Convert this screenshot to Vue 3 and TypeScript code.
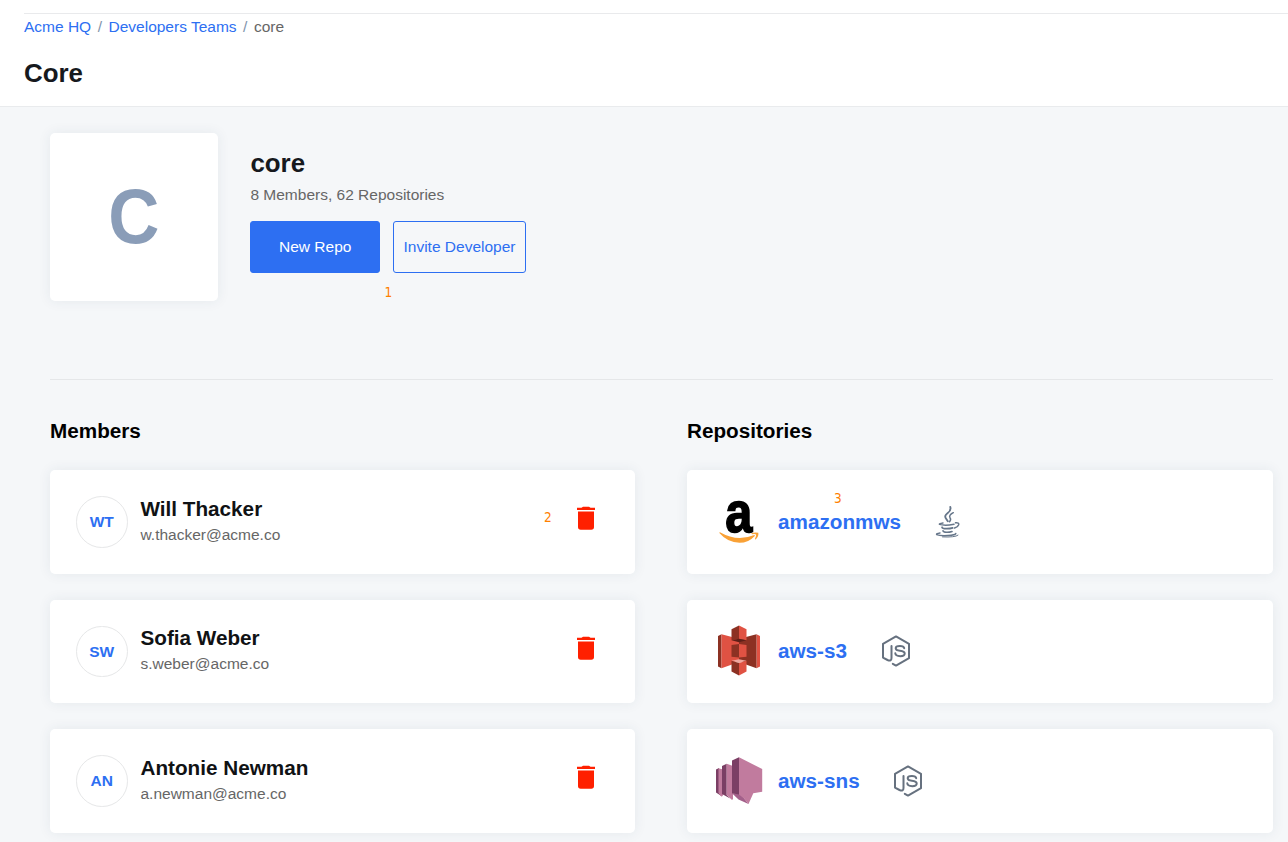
<script setup lang="ts">
interface Member {
  name: string
  email: string
  initials: string
  marker?: string
}

interface Repo {
  name: string
  logo: 'amazon' | 's3' | 'sns'
  lang: 'java' | 'node'
  marker?: string
}

const members: Member[] = [
  { name: 'Will Thacker', email: 'w.thacker@acme.co', initials: 'WT', marker: '2' },
  { name: 'Sofia Weber', email: 's.weber@acme.co', initials: 'SW' },
  { name: 'Antonie Newman', email: 'a.newman@acme.co', initials: 'AN' },
]

const repos: Repo[] = [
  { name: 'amazonmws', logo: 'amazon', lang: 'java', marker: '3' },
  { name: 'aws-s3', logo: 's3', lang: 'node' },
  { name: 'aws-sns', logo: 'sns', lang: 'node' },
]
</script>

<template>
  <div class="page">
    <header class="header">
      <nav class="crumbs">
        <a>Acme HQ</a><span class="slash">/</span><a>Developers Teams</a><span class="slash">/</span><span>core</span>
      </nav>
      <h1 class="title">Core</h1>
    </header>
    <main class="main">
      <section class="team">
        <div class="tile"><span class="letter">C</span></div>
        <div class="info">
          <h2 class="team-name">core</h2>
          <p class="stats">8 Members, 62 Repositories</p>
          <div class="actions">
            <button class="btn primary">New Repo</button>
            <button class="btn outline">Invite Developer</button>
            <span class="marker marker-actions">1</span>
          </div>
        </div>
      </section>
      <div class="columns">
        <section class="column">
          <h3 class="heading">Members</h3>
          <article v-for="m in members" :key="m.email" class="card member">
            <div class="avatar">{{ m.initials }}</div>
            <div class="person">
              <div class="name">{{ m.name }}</div>
              <div class="email">{{ m.email }}</div>
            </div>
            <span v-if="m.marker" class="marker marker-member">{{ m.marker }}</span>
            <svg class="trash" width="20" height="26" viewBox="0 0 20 26">
              <path d="M5.500 1.700L7 .8h6l1.500 .9H19v2.400H1V1.700z" />
              <path d="M2 5.500h16v15.600q0 2.700-2.700 2.700H4.700Q2 23.800 2 21.100z" />
            </svg>
          </article>
        </section>
        <section class="column">
          <h3 class="heading">Repositories</h3>
          <article v-for="r in repos" :key="r.name" class="card repo">
            <svg v-if="r.logo === 'amazon'" class="logo" width="52" height="52" viewBox="0 0 52 52">
              <text class="amazon-a" transform="translate(12.200 35.500) scale(.84 1)">a</text>
              <path d="M7 36.200Q24 46 40.500 39.200Q42.600 38.600 41.500 40.200Q35.500 46.800 26.500 46.800Q14.500 46.500 6.600 37.300Q6 36 7 36.200z" fill="#f9a136" />
              <path d="M38.700 37.300Q41.700 35.800 45.300 36.800Q46 40.500 42.700 43.400Q41.700 43.600 42.100 42.600Q43.500 39.600 43.100 38.500Q42.300 37.700 38.900 38.300Q38 38 38.700 37.300z" fill="#f9a136" />
            </svg>
            <svg v-else-if="r.logo === 's3'" class="logo" width="52" height="52" viewBox="0 0 52 52">
              <path d="M18 12h8v25h-8z" fill="#e05243" />
              <path d="M26 12h8v25h-8z" fill="#8c3123" />
              <path d="M5 11L8.500 9.200v34L5 41.500z" fill="#8c3123" />
              <path d="M8.500 9.200L19 12v27.500L8.500 43.200z" fill="#e05243" />
              <path d="M47 11l-3.500-1.800v34l3.500-1.700z" fill="#e05243" />
              <path d="M43.500 9.200L33 12v27.500l10.500 3.700z" fill="#8c3123" />
              <path d="M18.500 20L26 19v13.500l-7.500-.8z" fill="#8c3123" />
              <path d="M26 19l7.500 1v11.700L26 32.500z" fill="#e05243" />
              <path d="M26 .5l-7.500 3.800v11L26 14z" fill="#8c3123" />
              <path d="M26 .5l7.500 3.800v11L26 14z" fill="#e05243" />
              <path d="M18.500 15.300L26 13.800l7.500 1.500L26 17.300z" fill="#5e1f18" />
              <path d="M18.500 35.800L26 34.300l7.500 1.500L26 38z" fill="#f0a8a0" />
              <path d="M18.500 35.800L26 38v12.500l-7.500-4z" fill="#8c3123" />
              <path d="M33.500 35.800L26 38v12.500l7.500-4z" fill="#e05243" />
            </svg>
            <svg v-else class="logo" width="52" height="52" viewBox="0 0 52 52">
              <path d="M3 14.500L6 13v25l3.500 3.700L3 37.500z" fill="#7b3f65" />
              <path d="M5.500 13.200L10 14.500v26L8.200 41.500 5.500 38z" fill="#c17b9e" />
              <path d="M9 11l4.700-2.300V40l3.500 3.500L9 39z" fill="#7b3f65" />
              <path d="M13.700 8.700L20 11v33l-1 1L13.700 40z" fill="#c17b9e" />
              <path d="M19 38.200L27 38l8.500 11L25.500 44.500z" fill="#a3608a" />
              <path d="M19 5.500L26 2.300v37.200l-7-1.200z" fill="#7b3f65" />
              <path d="M26 2.300l23.200 11.700v22.700L40.300 38.300l-4.800 10.700L31 43.500L26 39.500z" fill="#c17b9e" />
            </svg>
            <a class="repo-name">{{ r.name }}</a>
            <svg v-if="r.lang === 'java'" class="java" width="26" height="32" viewBox="0 0 26 32">
              <g fill="none" stroke="#66768a" stroke-linecap="round">
                <path d="M15.300 1Q16.300 4.500 12.500 7.200T11.300 13L12.800 15.200" stroke-width="1.900" />
                <path d="M18.300 6.700Q13.500 9.200 15 11.700Q16.400 13.500 14.500 15.700" stroke-width="1.500" />
                <path d="M8 17Q3.800 17.800 4.500 18.400Q10 20 19 18.300" stroke-width="1.500" />
                <path d="M20.500 16.800Q24.300 16.400 23.700 18.800Q22.800 21.200 19.600 22" stroke-width="1.500" />
                <path d="M7 21.200Q7.500 22.700 11 22.700Q15 22.800 17.700 21.900" stroke-width="1.700" />
                <path d="M8 24.800Q8.500 26.300 11.500 26.300Q14.500 26.400 17 25.500" stroke-width="1.600" />
                <path d="M5 27Q1 27.700 1.700 28.600Q5 30 13 29.500Q20.500 29.100 20.800 27.500" stroke-width="1.500" />
                <path d="M7.500 30.900Q20 31.500 23 29.200" stroke-width="1" />
              </g>
            </svg>
            <svg v-else class="node" width="30" height="32" viewBox="0 0 30 32">
              <g fill="none" stroke="#66717f" stroke-width="2" stroke-linejoin="round" stroke-linecap="round">
                <path d="M10.500 11V23Q10.500 26.800 6.500 25L2 22.600V8.800L15 1.400L28 8.800V23.200L15 30.600L11.800 28.800" />
                <path d="M23.200 13.200Q22.800 10.900 18.900 10.900Q14.700 10.900 14.700 13.200Q14.700 15.300 18.900 15.700Q23.700 16.200 23.700 18.500Q23.700 21.200 19.300 21.200Q14.500 21.200 14.300 18.300" />
              </g>
            </svg>
            <span v-if="r.marker" class="marker marker-repo">{{ r.marker }}</span>
          </article>
        </section>
      </div>
    </main>
  </div>
</template>

<style>
body {
  margin: 0;
  background: #f5f7f9;
}
</style>

<style scoped>
.page {
  box-sizing: border-box;
  width: 1288px;
  height: 842px;
  overflow: hidden;
  background: #f5f7f9;
  color: #16191d;
  font-family: "Liberation Sans", Arial, sans-serif;
  font-size: 15.5px;
}
.header {
  box-sizing: border-box;
  height: 107px;
  padding: 13px 0 0 24px;
  border-bottom: 1px solid #e9ebed;
  background: #fff;
}
.crumbs {
  border-top: 1px solid #e9eaec;
  padding-top: 4px;
  line-height: 18px;
  color: #666;
}
.crumbs a {
  color: #2d6ff2;
}
.slash {
  margin: 0 6.500px;
  color: #8294ac;
}
.title,
.team-name {
  margin: 0;
  font-size: 25.900px;
  line-height: 30px;
}
.title {
  margin-top: 22px;
}
.main {
  padding: 26px 15px 0 50px;
}
.team {
  display: flex;
  box-sizing: border-box;
  height: 247px;
  border-bottom: 1px solid #e5e7e9;
}
.tile,
.card {
  border-radius: 5px;
  background: #fff;
  box-shadow: 0 0 13px rgba(40, 70, 90, 0.08);
}
.tile {
  width: 168px;
  height: 168px;
  line-height: 166px;
  text-align: center;
  font-size: 77px;
  font-weight: 700;
  color: #8a9db8;
}
.letter {
  display: inline-block;
  transform: scaleX(0.92);
}
.info {
  padding: 15px 0 0 32.400px;
}
.stats {
  margin: 8px 0 17px;
  line-height: 18px;
  color: #666;
}
.actions {
  position: relative;
  display: flex;
  gap: 13px;
}
.btn {
  box-sizing: border-box;
  height: 52px;
  padding: 0;
  border: 1px solid #2d6ff2;
  border-radius: 3px;
  font: inherit;
}
.primary {
  width: 129.600px;
  background: #2d6ff2;
  color: #fff;
}
.outline {
  width: 133px;
  background: transparent;
  color: #2d6ff2;
}
.columns {
  display: grid;
  grid-template-columns: 585px 586px;
  justify-content: space-between;
}
.heading {
  margin: 38px 0 26px;
  font-size: 20.700px;
  line-height: 26px;
  color: #000;
}
.card {
  position: relative;
  display: flex;
  align-items: center;
  box-sizing: border-box;
  height: 103.600px;
  margin-bottom: 26px;
}
.member {
  padding: 0 39px 0 26px;
}
.avatar {
  box-sizing: border-box;
  width: 51.500px;
  height: 51.500px;
  border: 1px solid #e6e7e8;
  border-radius: 50%;
  line-height: 49.500px;
  text-align: center;
  font-weight: 700;
  color: #2d6ff2;
}
.person {
  flex: 1;
  margin: -2px 0 0 13px;
}
.name {
  font-size: 20.700px;
  font-weight: 700;
  line-height: 27px;
  color: #101214;
}
.email {
  line-height: 25px;
  color: #666;
}
.trash {
  margin-top: -5px;
  fill: #ff2000;
}
.repo {
  padding-left: 26px;
}
.logo {
  overflow: visible;
}
.amazon-a {
  font-size: 58px;
  font-weight: 700;
  fill: #000;
  stroke: #000;
  stroke-width: 1.600px;
}
.repo-name {
  margin-left: 13px;
  font-size: 20.700px;
  font-weight: 700;
  color: #2d6ff2;
}
.java {
  margin-left: 34px;
}
.node {
  margin-left: 33.600px;
}
.marker {
  position: absolute;
  font-family: "DejaVu Sans Condensed", "DejaVu Sans", sans-serif;
  font-size: 13.500px;
  line-height: 16px;
  color: #ff8000;
}
.marker-actions {
  left: 134px;
  top: 63px;
}
.marker-member {
  left: 494px;
  top: 39px;
}
.marker-repo {
  left: 147px;
  top: 20px;
}
</style>
